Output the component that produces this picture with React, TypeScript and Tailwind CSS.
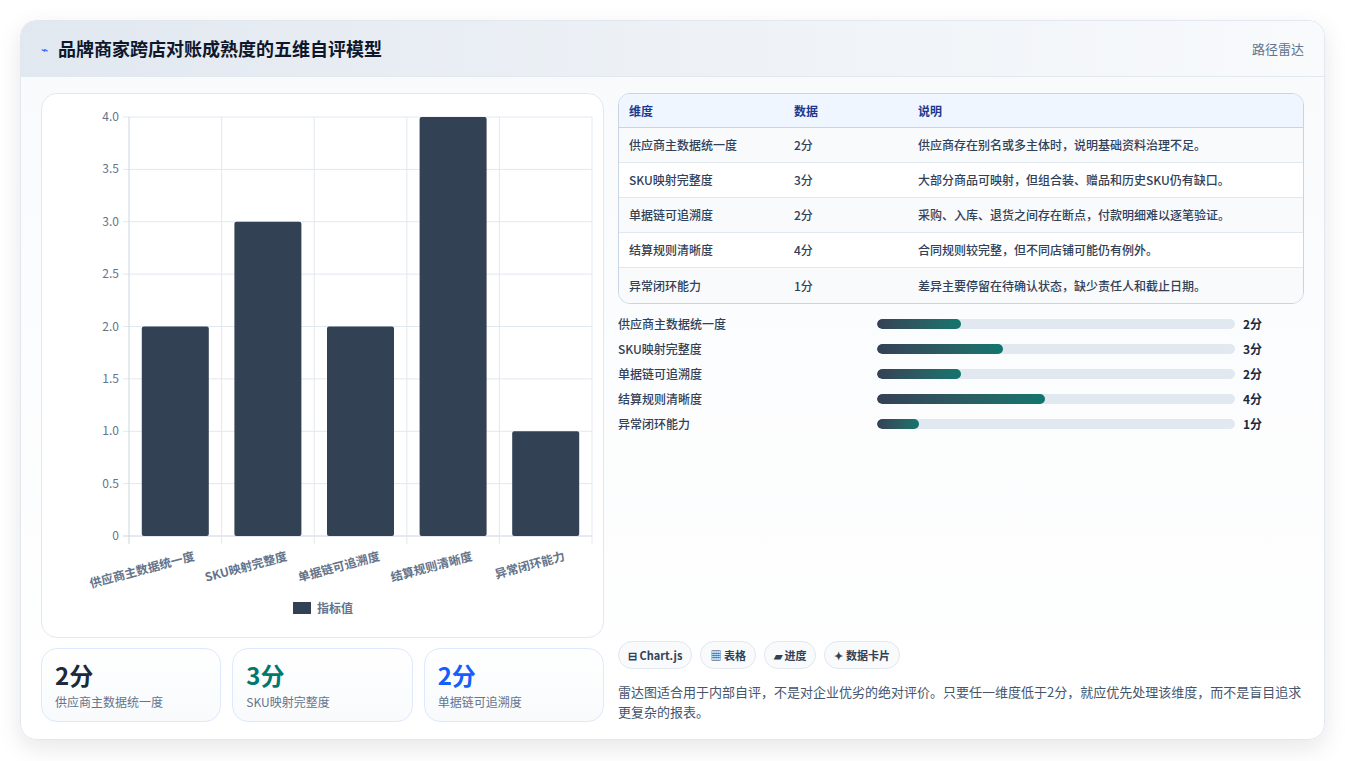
const dims = [
  { name: "供应商主数据统一度", v: 2, note: "供应商存在别名或多主体时，说明基础资料治理不足。" },
  { name: "SKU映射完整度", v: 3, note: "大部分商品可映射，但组合装、赠品和历史SKU仍有缺口。" },
  { name: "单据链可追溯度", v: 2, note: "采购、入库、退货之间存在断点，付款明细难以逐笔验证。" },
  { name: "结算规则清晰度", v: 4, note: "合同规则较完整，但不同店铺可能仍有例外。" },
  { name: "异常闭环能力", v: 1, note: "差异主要停留在待确认状态，缺少责任人和截止日期。" },
];

const font = { fontFamily: '"Noto Sans CJK SC", "Noto Sans", sans-serif' };

function BarChart() {
  const x0 = 87, x1 = 550, y0 = 23, y1 = 442;
  const h = y1 - y0;
  const cw = (x1 - x0) / 5;
  const ticks = [0, 0.5, 1, 1.5, 2, 2.5, 3, 3.5, 4];
  return (
    <svg width="563" height="545" className="block">
      {ticks.map((t) => {
        const y = y1 - (t / 4) * h;
        return (
          <g key={t}>
            <line x1={x0 - 6} x2={x1} y1={y} y2={y} stroke={t === 0 ? "#cbd5e1" : "#e2e8f0"} />
            <text x={x0 - 10} y={y + 4} textAnchor="end" fontSize="12" fill="#64748b" style={font}>
              {t === 0 ? "0" : t.toFixed(1)}
            </text>
          </g>
        );
      })}
      {[0, 1, 2, 3, 4, 5].map((i) => (
        <line key={i} x1={x0 + i * cw} x2={x0 + i * cw} y1={y0} y2={y1 + 8} stroke={i === 0 ? "#cbd5e1" : "#e2e8f0"} />
      ))}
      {dims.map((d, i) => {
        const bh = (d.v / 4) * h;
        const cx = x0 + cw * i + cw / 2;
        return (
          <g key={d.name}>
            <rect x={cx - 33.5} y={y1 - bh} width="67" height={bh} rx="2" fill="#334155" />
            <text
              x={cx + 20}
              y={y1 + 24}
              textAnchor="end"
              fontSize="12"
              fontWeight="600"
              fill="#64748b"
              transform={`rotate(-15 ${cx + 20} ${y1 + 24})`}
              style={font}
            >
              {d.name}
            </text>
          </g>
        );
      })}
      <rect x="251" y="508" width="18" height="12" fill="#334155" />
      <text x="275" y="519" fontSize="12" fontWeight="600" fill="#64748b" style={font}>指标值</text>
    </svg>
  );
}

export default function App() {
  return (
    <div className="min-h-screen bg-white p-5" style={font}>
      <div className="h-[720px] rounded-2xl border border-slate-200 bg-gradient-to-b from-slate-50 to-white shadow-[0_8px_24px_rgba(15,23,42,0.10)] overflow-hidden flex flex-col">
        <div className="h-14 shrink-0 flex items-center justify-between px-5 bg-gradient-to-r from-[#e2e8f0] to-[#f8fafc] border-b border-slate-200">
          <div className="flex items-center gap-2.5">
            <span className="text-blue-600 text-xs">⌁</span>
            <h1 className="text-[18px] font-bold text-slate-900">品牌商家跨店对账成熟度的五维自评模型</h1>
          </div>
          <span className="text-[13px] text-slate-500">路径雷达</span>
        </div>
        <div className="flex-1 flex gap-[14px] px-5 pt-4 pb-5">
          <div className="w-[563px] flex flex-col gap-[10px]">
            <div className="h-[545px] rounded-2xl border border-slate-200 bg-white overflow-hidden">
              <BarChart />
            </div>
            <div className="grid grid-cols-3 gap-[11px]">
              {[
                { v: "2分", c: "text-slate-800", l: "供应商主数据统一度" },
                { v: "3分", c: "text-teal-700", l: "SKU映射完整度" },
                { v: "2分", c: "text-blue-600", l: "单据链可追溯度" },
              ].map((s) => (
                <div key={s.l} className="h-[74px] rounded-2xl border border-blue-100 bg-gradient-to-b from-white to-slate-50 px-[13px] pt-[10px]">
                  <div className={`text-[24px] font-bold leading-8 ${s.c}`}>{s.v}</div>
                  <div className="text-[12px] text-slate-500 mt-0.5">{s.l}</div>
                </div>
              ))}
            </div>
          </div>
          <div className="flex-1 flex flex-col">
            <div className="rounded-xl border border-slate-300 overflow-hidden text-[12px]">
              <div className="h-[34px] grid grid-cols-[165px_124px_1fr] items-center px-[10px] bg-[#eff6ff] border-b border-slate-300 font-semibold text-blue-900">
                <div>维度</div><div>数据</div><div>说明</div>
              </div>
              {dims.map((d, i) => (
                <div key={d.name} className={`h-[35px] grid grid-cols-[165px_124px_1fr] items-center px-[10px] text-slate-700 font-medium ${i % 2 ? "bg-white" : "bg-slate-50"} ${i < 4 ? "border-b border-slate-200" : ""}`}>
                  <div>{d.name}</div><div>{d.v}分</div><div>{d.note}</div>
                </div>
              ))}
            </div>
            <div className="mt-[12px] flex flex-col gap-[9px]">
              {dims.map((d) => (
                <div key={d.name} className="h-4 flex items-center text-[12px] text-slate-700 font-medium">
                  <div className="w-[259px]">{d.name}</div>
                  <div className="w-[358px] h-[10px] rounded-full bg-slate-200 overflow-hidden">
                    <div className="h-full rounded-full bg-gradient-to-r from-[#334155] to-[#0f766e]" style={{ width: `${d.v * 11.7}%` }} />
                  </div>
                  <div className="ml-2 font-semibold text-slate-800">{d.v}分</div>
                </div>
              ))}
            </div>
            <div className="mt-auto">
              <div className="flex gap-2">
                {["⊟ Chart.js", "▦ 表格", "▰ 进度", "✦ 数据卡片"].map((p) => (
                  <span key={p} className="h-7 px-[9px] flex items-center rounded-full border border-slate-200 bg-slate-50 text-[11px] font-semibold text-slate-700">{p}</span>
                ))}
              </div>
              <p className="mt-[13px] text-[13px] leading-5 text-slate-600">
                雷达图适合用于内部自评，不是对企业优劣的绝对评价。只要任一维度低于2分，就应优先处理该维度，而不是盲目追求更复杂的报表。
              </p>
            </div>
          </div>
        </div>
      </div>
    </div>
  );
}
